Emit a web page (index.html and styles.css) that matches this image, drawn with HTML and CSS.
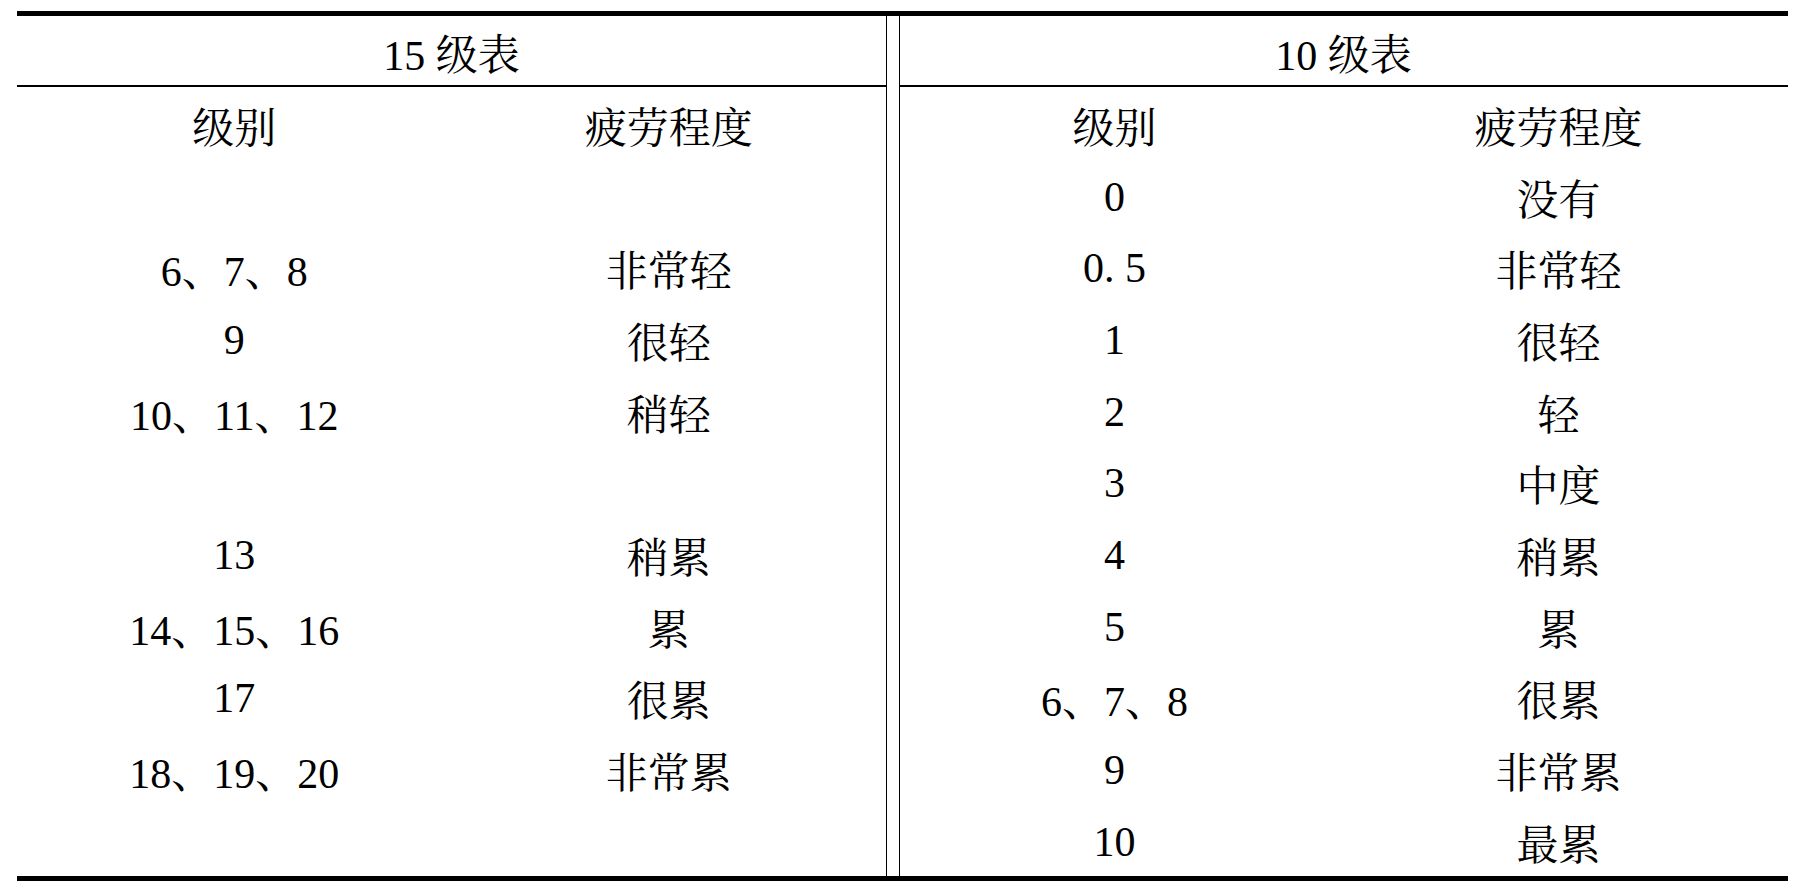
FILE: index.html
```html
<!DOCTYPE html>
<html lang="zh-CN">
<head>
<meta charset="utf-8">
<title>疲劳程度分级表</title>
<link rel="stylesheet" href="styles.css">
</head>
<body>
<div class="sheet">
  <div class="half left">
    <div class="title">15 级表</div>
    <div class="grid cols-left">
      <div class="cell">级别</div><div class="cell">疲劳程度</div>
      <div class="cell"></div><div class="cell"></div>
      <div class="cell">6、7、8</div><div class="cell">非常轻</div>
      <div class="cell">9</div><div class="cell">很轻</div>
      <div class="cell">10、11、12</div><div class="cell">稍轻</div>
      <div class="cell"></div><div class="cell"></div>
      <div class="cell">13</div><div class="cell">稍累</div>
      <div class="cell">14、15、16</div><div class="cell">累</div>
      <div class="cell">17</div><div class="cell">很累</div>
      <div class="cell">18、19、20</div><div class="cell">非常累</div>
      <div class="cell"></div><div class="cell"></div>
    </div>
  </div>
  <div class="gap"></div>
  <div class="half right">
    <div class="title">10 级表</div>
    <div class="grid cols-right">
      <div class="cell">级别</div><div class="cell">疲劳程度</div>
      <div class="cell">0</div><div class="cell">没有</div>
      <div class="cell">0. 5</div><div class="cell">非常轻</div>
      <div class="cell">1</div><div class="cell">很轻</div>
      <div class="cell">2</div><div class="cell">轻</div>
      <div class="cell">3</div><div class="cell">中度</div>
      <div class="cell">4</div><div class="cell">稍累</div>
      <div class="cell">5</div><div class="cell">累</div>
      <div class="cell">6、7、8</div><div class="cell">很累</div>
      <div class="cell">9</div><div class="cell">非常累</div>
      <div class="cell">10</div><div class="cell">最累</div>
    </div>
  </div>
</div>
</body>
</html>
```

FILE: styles.css
```css
html, body {
  margin: 0;
  padding: 0;
  background: #ffffff;
}

body {
  font-family: "Liberation Serif", "Noto Serif CJK SC", "Noto Sans CJK SC", serif;
  font-size: 42px;
  color: #000000;
}

.sheet {
  margin: 11px 0 0 17px;
  width: 1771px;
  border-top: 5px solid #000;
  border-bottom: 5px solid #000;
  display: flex;
  align-items: stretch;
}

.half.left {
  width: 869px;
  border-right: 1.5px solid #000;
}

.gap {
  width: 11.5px;
}

.half.right {
  width: 888px;
  border-left: 1.5px solid #000;
}

.title {
  height: 71px;
  border-bottom: 2px solid #000;
  display: flex;
  align-items: center;
  justify-content: center;
  padding-top: 2px;
  box-sizing: border-box;
}

.grid {
  display: grid;
  grid-auto-rows: 71.7px;
}

.cols-left {
  grid-template-columns: 1fr 1fr;
}

.cols-right {
  grid-template-columns: 430px 1fr;
}

.cell {
  display: flex;
  align-items: center;
  justify-content: center;
  padding-top: 4px;
  box-sizing: border-box;
  white-space: pre;
}
```
